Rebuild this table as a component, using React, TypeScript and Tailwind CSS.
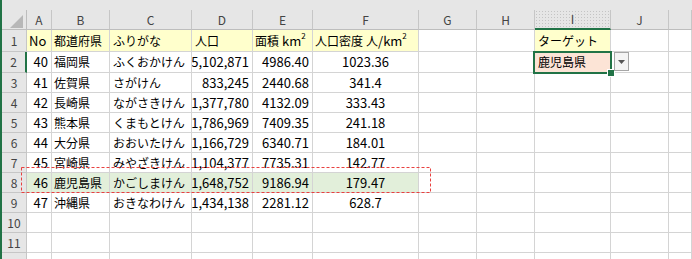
import React from "react";

const COLS = ["A", "B", "C", "D", "E", "F", "G", "H", "I", "J", ""];

type Row = [string, string, string, string, string, string];

const DATA: Row[] = [
  ["40", "福岡県", "ふくおかけん", "5,102,871", "4986.40", "1023.36"],
  ["41", "佐賀県", "さがけん", "833,245", "2440.68", "341.4"],
  ["42", "長崎県", "ながさきけん", "1,377,780", "4132.09", "333.43"],
  ["43", "熊本県", "くまもとけん", "1,786,969", "7409.35", "241.18"],
  ["44", "大分県", "おおいたけん", "1,166,729", "6340.71", "184.01"],
  ["45", "宮崎県", "みやざきけん", "1,104,377", "7735.31", "142.77"],
  ["46", "鹿児島県", "かごしまけん", "1,648,752", "9186.94", "179.47"],
  ["47", "沖縄県", "おきなわけん", "1,434,138", "2281.12", "628.7"],
];

const cell = "border-r border-b border-[#d4d4d4] flex items-center overflow-hidden whitespace-nowrap";
const jp = "text-[12px] text-black [font-family:'Noto_Sans_CJK_JP',sans-serif]";
const num = "text-[13px] text-black [font-family:'Noto_Sans_CJK_JP',sans-serif]";
const hdr = "bg-[#e6e6e6] flex items-center justify-center text-[12px] text-[#444] [font-family:'Noto_Sans_CJK_JP',sans-serif]";

function RowHeader({ n, active }: { n: number; active?: boolean }) {
  return active ? (
    <div className={`${hdr} bg-[#d2d2d2] border-r-2 border-r-[#217346] border-b border-b-[#c6c6c6] text-[#222]`}>{n}</div>
  ) : (
    <div className={`${hdr} border-r border-b border-[#c6c6c6]`}>{n}</div>
  );
}

function Empty({ bg }: { bg?: string }) {
  return <div className={`${cell} ${bg ?? ""}`} />;
}

export default function App() {
  return (
    <div className="relative w-[692px] h-[259px] overflow-hidden bg-white border-l-2 border-[#217346]">
      <div className="h-[10px] bg-[#e6e6e6]" />
      <div className="grid grid-cols-[25px_25px_58px_82px_61px_60px_106px_58px_58px_76px_58px_23px] grid-rows-[20px_22px_21px_repeat(10,20px)]">
        {/* column headers */}
        <div className="bg-[#e6e6e6] border-r border-b border-[#bdbdbd] relative">
          <svg className="absolute left-[8px] top-[5px]" width="13" height="13" viewBox="0 0 13 13">
            <polygon points="13,0 13,13 0,13" fill="#b7b7b7" />
          </svg>
        </div>
        {COLS.map((c, i) =>
          c === "I" ? (
            <div
              key={i}
              className={`${hdr} bg-[#d2d2d2] [background-image:radial-gradient(#c4c4c4_0.6px,transparent_0.7px)] [background-size:3px_3px] border-r border-r-[#c6c6c6] border-b-2 border-b-[#217346] text-[#222]`}
            >
              {c}
            </div>
          ) : (
            <div key={i} className={`${hdr} border-r border-r-[#c6c6c6] border-b border-b-[#bdbdbd]`}>
              {c}
            </div>
          )
        )}

        {/* row 1: titles */}
        <RowHeader n={1} />
        <div className={`${cell} ${num} bg-[#ffffcc] pl-[2px]`}>No</div>
        <div className={`${cell} ${jp} bg-[#ffffcc] pl-[2px]`}>都道府県</div>
        <div className={`${cell} ${jp} bg-[#ffffcc] pl-[3px]`}>ふりがな</div>
        <div className={`${cell} ${jp} bg-[#ffffcc] pl-[3px]`}>人口</div>
        <div className={`${cell} ${jp} bg-[#ffffcc] pl-[2px]`}>
          面積<span className="ml-[3px] text-[13px]">km</span>
          <sup className="text-[8px] -translate-y-[1px]">2</sup>
        </div>
        <div className={`${cell} ${jp} bg-[#ffffcc] pl-[2px]`}>
          人口密度<span className="ml-[3px]">人</span>
          <span className="text-[13px]">/km</span>
          <sup className="text-[8px] -translate-y-[1px]">2</sup>
        </div>
        <Empty />
        <Empty />
        <div className={`${cell} ${jp} bg-[#ffffcc] pl-[3px]`}>ターゲット</div>
        <Empty />
        <Empty />

        {/* prefecture rows */}
        {DATA.map((r, idx) => {
          const n = idx + 2;
          const hl = n === 8 ? "bg-[#e2efda]" : "";
          return (
            <React.Fragment key={n}>
              <RowHeader n={n} active={n === 2} />
              <div className={`${cell} ${num} ${hl} justify-end pr-[3px]`}>{r[0]}</div>
              <div className={`${cell} ${jp} ${hl} pl-[2px]`}>{r[1]}</div>
              <div className={`${cell} ${jp} ${hl} pl-[3px]`}>{r[2]}</div>
              <div className={`${cell} ${num} ${hl} justify-end pr-[3px]`}>{r[3]}</div>
              <div className={`${cell} ${num} ${hl} justify-end pr-[3px]`}>{r[4]}</div>
              <div className={`${cell} ${num} ${hl} justify-center`}>{r[5]}</div>
              <Empty />
              <Empty />
              {n === 2 ? (
                <div className={`${cell} ${jp} bg-[#fce4d6] pl-[3px]`}>鹿児島県</div>
              ) : (
                <Empty />
              )}
              <Empty />
              <Empty />
            </React.Fragment>
          );
        })}

        {/* empty rows 10-12 */}
        {[10, 11, 12].map((n) => (
          <React.Fragment key={n}>
            <RowHeader n={n} />
            {COLS.map((_, i) => (
              <Empty key={i} />
            ))}
          </React.Fragment>
        ))}
      </div>

      {/* active cell frame with fill handle */}
      <div className="absolute left-[531px] top-[51px] w-[79px] h-[23px] border-2 border-[#217346] pointer-events-none" />
      <div className="absolute left-[605px] top-[69px] w-[8px] h-[8px] bg-[#217346] border border-white" />

      {/* list dropdown button */}
      <div className="absolute left-[612px] top-[52px] w-[15px] h-[19px] border border-[#a6a6a6] bg-[#f4f4f4] flex items-center justify-center">
        <svg width="7" height="4" viewBox="0 0 7 4">
          <polygon points="0,0 7,0 3.5,4" fill="#555" />
        </svg>
      </div>

      {/* dashed outline drawn around row 8 */}
      <svg className="absolute left-[19px] top-[167px]" width="410" height="26" viewBox="0 0 410 26">
        <rect x="0.5" y="0.5" width="409" height="25" fill="none" stroke="#e8403f" strokeWidth="1" strokeDasharray="3 2" />
      </svg>
    </div>
  );
}
